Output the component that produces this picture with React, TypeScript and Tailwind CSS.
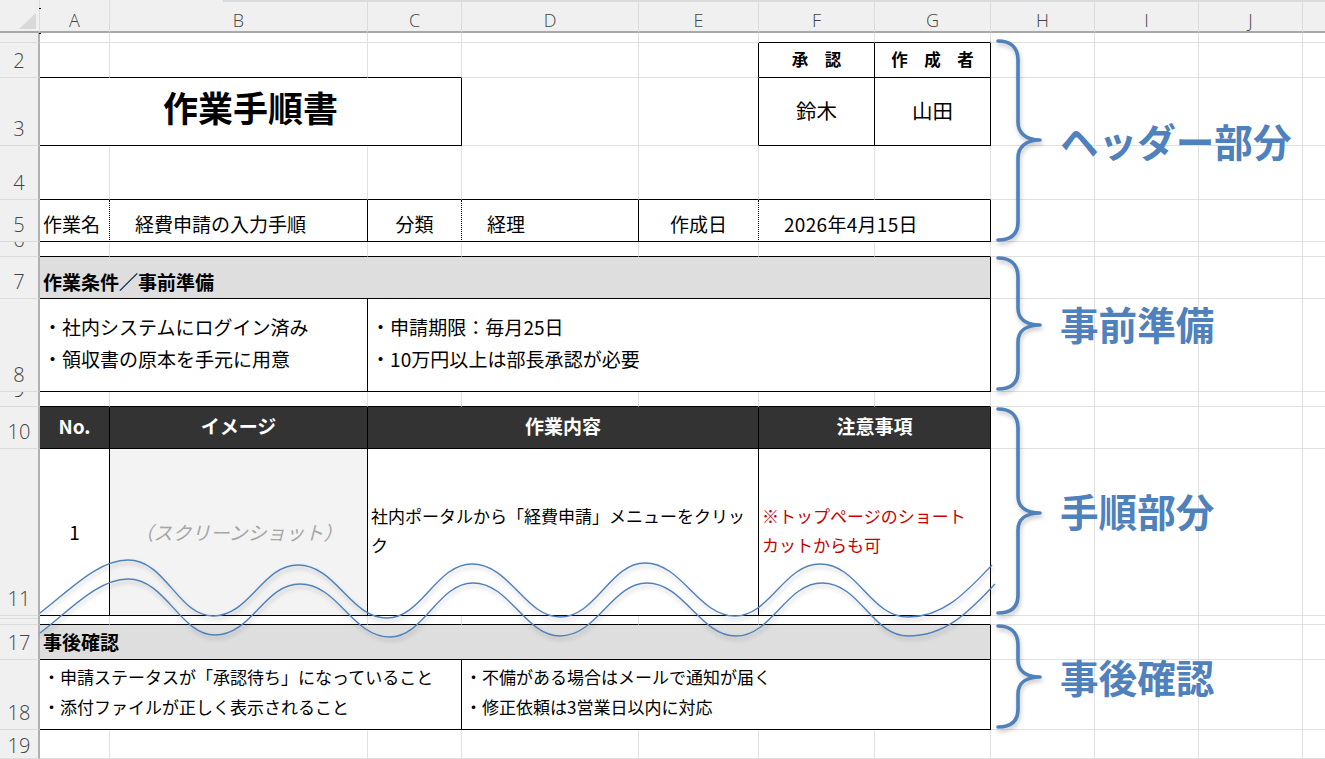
import React from "react";

const GR = "border-r border-r-[#e0e0e0]";
const KR = "border-r border-r-black";
const DR = "border-r border-r-black [border-right-style:dotted]";
const GB = "border-b border-b-[#e0e0e0]";
const KB = "border-b border-b-black";

function Head({ label }: { label: string }) {
  return (
    <th className="h-[33px] border-r border-r-[#dcdcdc] border-b-2 border-b-[#a8a8a8] bg-[#f0f0f0] align-top">
      <div className="pt-[10px] text-center font-['Open_Sans',sans-serif] text-[18px] leading-[21px] font-light text-[#444]">
        {label}
      </div>
    </th>
  );
}

function RowHead({ label, inner = "" }: { label?: string; inner?: string }) {
  return (
    <td className="border-r-2 border-r-[#b0b0b0] border-b border-b-[#dcdcdc] bg-[#f0f0f0] align-bottom">
      <div
        className={`flex items-end justify-center overflow-hidden pb-[3px] font-['Open_Sans',sans-serif] text-[20px] leading-[26px] font-light text-[#444] ${inner}`}
      >
        {label}
      </div>
    </td>
  );
}

function RightCells() {
  return (
    <>
      <td className={`${GR} ${GB}`} />
      <td className={`${GR} ${GB}`} />
      <td className={`${GR} ${GB}`} />
      <td className={GB} />
    </>
  );
}

function Waves() {
  return (
    <svg
      className="pointer-events-none absolute top-0 left-0 drop-shadow-[1px_3px_2px_rgba(0,0,0,0.22)]"
      width="1325"
      height="759"
      fill="none"
    >
      <path
        stroke="#4f81bd"
        strokeWidth="1.4"
        d="M40 613 C70 590 98 560 128 560 C166 560 178 616 213 616 C250 616 262 565 298 565 C336 565 350 618 387 618 C422 618 436 564 472 564 C510 564 525 617 560 617 C596 617 610 563 645 563 C682 563 698 616 735 616 C770 616 784 564 820 564 C858 564 870 617 908 617 C945 617 968 590 992 565"
      />
      <path
        stroke="#4f81bd"
        strokeWidth="1.4"
        d="M40 633 C70 610 98 579 128 579 C166 579 180 635 215 635 C252 635 264 584 300 584 C338 584 352 637 390 637 C424 637 438 583 473 583 C510 583 525 636 560 636 C597 636 612 583 647 583 C684 583 700 636 736 636 C772 636 786 583 822 583 C860 583 872 636 908 636 C948 636 972 608 995 584"
      />
      <g stroke="#4f81bd" strokeWidth="3.6" strokeLinecap="round" strokeLinejoin="round">
        <path d="M998 41 C1010 41 1018 47 1018 60 V122 C1018 133 1026 140 1040 140 C1026 140 1018 147 1018 158 V222 C1018 235 1010 240 998 240" />
        <path d="M998 258 C1010 258 1018 264 1018 277 V308 C1018 319 1026 325 1040 325 C1026 325 1018 331 1018 342 V371 C1018 384 1010 389 998 389" />
        <path d="M998 409 C1010 409 1018 415 1018 428 V496 C1018 507 1026 513 1040 513 C1026 513 1018 519 1018 530 V595 C1018 608 1010 613 998 613" />
        <path d="M998 626 C1010 626 1018 632 1018 645 V660 C1018 671 1026 677 1040 677 C1026 677 1018 683 1018 694 V709 C1018 722 1010 727 998 727" />
      </g>
    </svg>
  );
}

function Label({ text, pos }: { text: string; pos: string }) {
  return (
    <div className={`absolute left-[1060px] text-[38.6px] leading-[50px] font-bold whitespace-nowrap text-[#4f81bd] ${pos}`}>
      {text}
    </div>
  );
}

export default function App() {
  return (
    <div className="relative h-[759px] w-[1325px] overflow-hidden bg-white font-['Noto_Sans_CJK_JP',sans-serif] text-[19px] text-black">
      <table className="w-[1325px] table-fixed border-separate border-spacing-0">
        <colgroup>
          <col className="w-[40px]" />
          <col className="w-[70px]" />
          <col className="w-[258px]" />
          <col className="w-[94px]" />
          <col className="w-[177px]" />
          <col className="w-[120px]" />
          <col className="w-[116px]" />
          <col className="w-[116px]" />
          <col className="w-[104px]" />
          <col className="w-[104px]" />
          <col className="w-[104px]" />
          <col className="w-[22px]" />
        </colgroup>
        <tbody>
          <tr>
            <th className="relative h-[33px] border-r border-b-2 border-r-[#dcdcdc] border-b-[#a8a8a8] bg-[#f0f0f0]">
              <div className="absolute top-[13px] left-[19px] h-[16px] w-[17px] bg-[#d9d9d9] [clip-path:polygon(100%_0,100%_100%,0_100%)]" />
            </th>
            <Head label="A" />
            <Head label="B" />
            <Head label="C" />
            <Head label="D" />
            <Head label="E" />
            <Head label="F" />
            <Head label="G" />
            <Head label="H" />
            <Head label="I" />
            <Head label="J" />
            <th className="border-b-2 border-b-[#a8a8a8] bg-[#f0f0f0]" />
          </tr>

          {/* row 1 */}
          <tr className="h-[10px]">
            <RowHead inner="h-[9px]" />
            <td className={`${GR} ${GB}`} />
            <td className={`${GR} ${GB}`} />
            <td className={`${GR} ${GB}`} />
            <td className={`${GR} ${GB}`} />
            <td className={`${GR} ${GB}`} />
            <td className={`${GR} ${KB}`} />
            <td className={`${GR} ${KB}`} />
            <RightCells />
          </tr>

          {/* row 2 */}
          <tr className="h-[35px]">
            <RowHead label="2" />
            <td className={`${GR} ${KB}`} />
            <td className={`${GR} ${KB}`} />
            <td className={`${GR} ${KB}`} />
            <td className={`${GR} ${GB}`} />
            <td className={`${KR} ${GB}`} />
            <td className={`${KR} ${KB} pb-[2px] text-center text-[16.5px] leading-[24px] font-bold`}>承　認</td>
            <td className={`${KR} ${KB} pb-[2px] text-center text-[16.5px] leading-[24px] font-bold`}>作　成　者</td>
            <RightCells />
          </tr>

          {/* row 3 */}
          <tr className="h-[68px]">
            <RowHead label="3" />
            <td colSpan={3} className={`${KR} ${KB} pb-[10px] text-center text-[35px] leading-[48px] font-bold`}>
              作業手順書
            </td>
            <td className={`${GR} ${GB}`} />
            <td className={`${KR} ${GB}`} />
            <td className={`${KR} ${KB} pb-[4px] text-center text-[20.5px] leading-[30px]`}>鈴木</td>
            <td className={`${KR} ${KB} pb-[4px] text-center text-[20.5px] leading-[30px]`}>山田</td>
            <RightCells />
          </tr>

          {/* row 4 */}
          <tr className="h-[54px]">
            <RowHead label="4" />
            <td className={`${GR} ${KB}`} />
            <td className={`${GR} ${KB}`} />
            <td className={`${GR} ${KB}`} />
            <td className={`${GR} ${KB}`} />
            <td className={`${GR} ${KB}`} />
            <td className={`${GR} ${KB}`} />
            <td className={`${GR} ${KB}`} />
            <RightCells />
          </tr>

          {/* row 5 */}
          <tr className="h-[42px]">
            <RowHead label="5" />
            <td className={`${DR} ${KB} pb-[2px] pl-[3px] align-bottom leading-[30px]`}>作業名</td>
            <td className={`${KR} ${KB} pb-[2px] pl-[25px] align-bottom leading-[30px]`}>経費申請の入力手順</td>
            <td className={`${DR} ${KB} pb-[2px] text-center align-bottom leading-[30px]`}>分類</td>
            <td className={`${KR} ${KB} pb-[2px] pl-[25px] align-bottom leading-[30px]`}>経理</td>
            <td className={`${DR} ${KB} pb-[2px] text-center align-bottom leading-[30px]`}>作成日</td>
            <td colSpan={2} className={`${KR} ${KB} pb-[2px] pl-[25px] align-bottom leading-[30px] tracking-[0.3px]`}>
              2026年4月15日
            </td>
            <RightCells />
          </tr>

          {/* row 6 */}
          <tr className="h-[15px]">
            <RowHead label="6" inner="h-[14px]" />
            <td className={`${GR} ${KB}`} />
            <td className={`${GR} ${KB}`} />
            <td className={`${GR} ${KB}`} />
            <td className={`${GR} ${KB}`} />
            <td className={`${GR} ${KB}`} />
            <td className={`${GR} ${KB}`} />
            <td className={`${GR} ${KB}`} />
            <RightCells />
          </tr>

          {/* row 7 */}
          <tr className="h-[42px]">
            <RowHead label="7" />
            <td
              colSpan={7}
              className={`${KR} ${KB} bg-[#dedede] pb-[1px] pl-[3px] align-bottom text-[19px] leading-[30px] font-bold`}
            >
              作業条件／事前準備
            </td>
            <RightCells />
          </tr>

          {/* row 8 */}
          <tr className="h-[93px]">
            <RowHead label="8" />
            <td colSpan={2} className={`${KR} ${KB} pb-[4px] pl-[3px] leading-[32px]`}>
              ・社内システムにログイン済み
              <br />
              ・領収書の原本を手元に用意
            </td>
            <td colSpan={5} className={`${KR} ${KB} pb-[4px] pl-[3px] leading-[32px] tracking-[0.05px]`}>
              ・申請期限：毎月25日
              <br />
              ・10万円以上は部長承認が必要
            </td>
            <RightCells />
          </tr>

          {/* row 9 */}
          <tr className="h-[15px]">
            <RowHead label="9" inner="h-[14px]" />
            <td className={`${GR} ${KB}`} />
            <td className={`${GR} ${KB}`} />
            <td className={`${GR} ${KB}`} />
            <td className={`${GR} ${KB}`} />
            <td className={`${GR} ${KB}`} />
            <td className={`${GR} ${KB}`} />
            <td className={`${GR} ${KB}`} />
            <RightCells />
          </tr>

          {/* row 10 */}
          <tr className="h-[42px]">
            <RowHead label="10" />
            <td className={`${KR} ${KB} bg-[#333333] pb-[3px] text-center text-[19px] leading-[26px] font-bold text-white`}>No.</td>
            <td className={`${KR} ${KB} bg-[#333333] pb-[3px] text-center text-[19px] leading-[26px] font-bold text-white`}>イメージ</td>
            <td colSpan={3} className={`${KR} ${KB} bg-[#333333] pb-[3px] text-center text-[19px] leading-[26px] font-bold text-white`}>
              作業内容
            </td>
            <td colSpan={2} className={`${KR} ${KB} bg-[#333333] pb-[3px] text-center text-[19px] leading-[26px] font-bold text-white`}>
              注意事項
            </td>
            <RightCells />
          </tr>

          {/* row 11 */}
          <tr className="h-[167px]">
            <RowHead label="11" />
            <td className={`${KR} ${KB} pb-[1px] text-center leading-[30px]`}>1</td>
            <td className={`${KR} ${KB} bg-[#f3f3f3] text-center text-[19px] leading-[30px] text-[#a6a6a6] italic`}>
              （スクリーンショット）
            </td>
            <td colSpan={3} className={`${KR} ${KB} pb-[4px] pl-[3px] text-[17px] leading-[29px]`}>
              社内ポータルから「経費申請」メニューをクリッ
              <br />
              ク
            </td>
            <td colSpan={2} className={`${KR} ${KB} pb-[4px] pl-[3px] text-[17px] leading-[29px] text-[#c80000]`}>
              ※トップページのショート
              <br />
              カットからも可
            </td>
            <RightCells />
          </tr>

          {/* rows 12-16 hidden */}
          <tr className="h-[9px]">
            <td className="border-r-2 border-b border-r-[#b0b0b0] border-b-[#dcdcdc] bg-[#f0f0f0] align-top">
              <div className="h-[3px] border-b border-b-[#dcdcdc]" />
            </td>
            <td className={`${GR} ${KB}`} />
            <td className={`${GR} ${KB}`} />
            <td className={`${GR} ${KB}`} />
            <td className={`${GR} ${KB}`} />
            <td className={`${GR} ${KB}`} />
            <td className={`${GR} ${KB}`} />
            <td className={`${GR} ${KB}`} />
            <RightCells />
          </tr>

          {/* row 17 */}
          <tr className="h-[35px]">
            <RowHead label="17" />
            <td colSpan={7} className={`${KR} ${KB} bg-[#dedede] pl-[3px] text-[19px] leading-[28px] font-bold`}>
              事後確認
            </td>
            <RightCells />
          </tr>

          {/* row 18 */}
          <tr className="h-[70px]">
            <RowHead label="18" />
            <td colSpan={3} className={`${KR} ${KB} pb-[5px] pl-[3px] text-[17px] leading-[30px]`}>
              ・申請ステータスが「承認待ち」になっていること
              <br />
              ・添付ファイルが正しく表示されること
            </td>
            <td colSpan={4} className={`${KR} ${KB} pb-[5px] pl-[3px] text-[17px] leading-[30px]`}>
              ・不備がある場合はメールで通知が届く
              <br />
              ・修正依頼は3営業日以内に対応
            </td>
            <RightCells />
          </tr>

          {/* row 19 */}
          <tr className="h-[29px]">
            <RowHead label="19" inner="h-[28px] translate-y-[4px]" />
            <td className={`${GR} ${GB}`} />
            <td className={`${GR} ${GB}`} />
            <td className={`${GR} ${GB}`} />
            <td className={`${GR} ${GB}`} />
            <td className={`${GR} ${GB}`} />
            <td className={`${GR} ${GB}`} />
            <td className={`${GR} ${GB}`} />
            <RightCells />
          </tr>
        </tbody>
      </table>

      <div className="absolute top-0 right-0 h-[2px] w-[1102px] bg-[#d8dadc]" />
      <div className="absolute top-[8px] left-[39px] h-[1px] w-[2px] bg-black" />
      <div className="absolute top-[33px] left-[39px] h-[1px] w-[2px] bg-black" />

      <Waves />
      <Label text="ヘッダー部分" pos="top-[115px]" />
      <Label text="事前準備" pos="top-[298px]" />
      <Label text="手順部分" pos="top-[485px]" />
      <Label text="事後確認" pos="top-[651px]" />
    </div>
  );
}
